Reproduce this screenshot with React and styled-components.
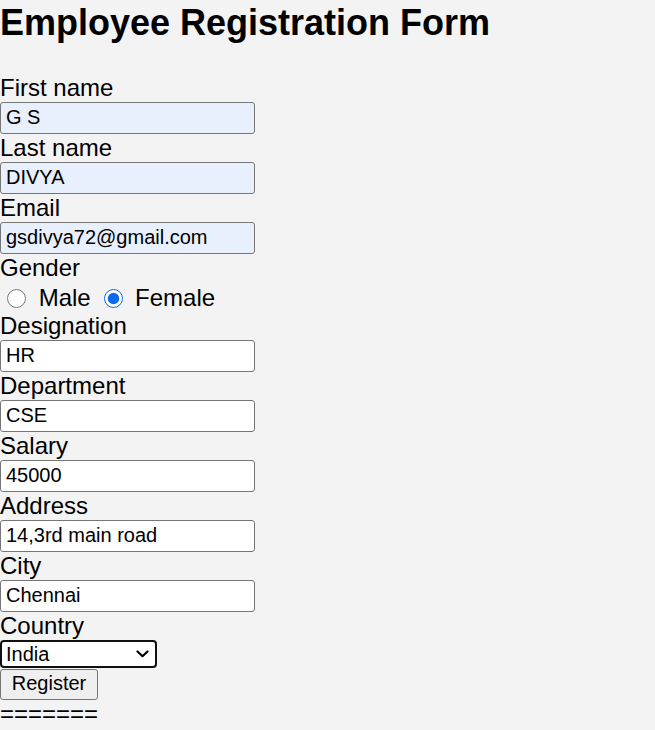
import React from "react";
import styled, { createGlobalStyle } from "styled-components";

const Global = createGlobalStyle`
  html, body { margin: 0; padding: 0; background: #f3f3f3; }
  body { font-family: "Liberation Sans", Arial, sans-serif; color: #000; }
`;

const Page = styled.div`
  width: 655px;
  min-height: 730px;
  background: #f3f3f3;
`;

const Title = styled.h1`
  margin: 2px 0 31px 0;
  font-size: 36px;
  line-height: 41px;
  font-weight: bold;
`;

const Form = styled.form`
  display: flex;
  flex-direction: column;
  align-items: flex-start;
`;

const Label = styled.label`
  display: block;
  font-size: 24px;
  line-height: 28px;
  height: 28px;
`;

const TextInput = styled.input`
  box-sizing: border-box;
  width: 255px;
  height: 32px;
  margin: 0;
  padding: 0 4px 2px 5px;
  border: 1px solid #767676;
  border-radius: 3px;
  font-family: "Liberation Sans", Arial, sans-serif;
  font-size: 20px;
  color: #000;
  background: ${(p) => (p.$filled ? "#e8f0fe" : "#fff")};
  outline: none;
`;

const RadioRow = styled.div`
  box-sizing: border-box;
  font-size: 24px;
  line-height: 29px;
  height: 30px;
  padding-top: 1px;
  white-space: pre;
`;

const Radio = styled.input`
  width: 19px;
  height: 19px;
  margin: 0 ${(p) => p.$mr}px 0 ${(p) => p.$ml}px;
  vertical-align: -2px;
  accent-color: #0b6bea;
`;

const SelectWrap = styled.div`
  position: relative;
  width: 157px;
  height: 28px;
`;

const Select = styled.select`
  appearance: none;
  box-sizing: border-box;
  width: 157px;
  height: 28px;
  margin: 0;
  padding: 0 0 0 4px;
  border: 2px solid #101010;
  border-radius: 4px;
  background: #fff;
  font-family: "Liberation Sans", Arial, sans-serif;
  font-size: 20px;
  color: #000;
  outline: none;
`;

const Chevron = styled.svg`
  position: absolute;
  right: 8px;
  top: 10px;
  pointer-events: none;
`;

const Button = styled.button`
  box-sizing: border-box;
  width: 98px;
  height: 31px;
  margin: 1px 0 0 0;
  padding: 0 0 2px 0;
  border: 1px solid #767676;
  border-radius: 3px;
  background: #efefef;
  font-family: "Liberation Sans", Arial, sans-serif;
  font-size: 20px;
  color: #000;
`;

const Footer = styled.div`
  font-size: 24px;
  line-height: 28px;
`;

const fields = [
  ["First name", "G S", true],
  ["Last name", "DIVYA", true],
  ["Email", "gsdivya72@gmail.com", true],
];

const fields2 = [
  ["Designation", "HR"],
  ["Department", "CSE"],
  ["Salary", "45000"],
  ["Address", "14,3rd main road"],
  ["City", "Chennai"],
];

export default function App() {
  return (
    <Page>
      <Global />
      <Title>Employee Registration Form</Title>
      <Form onSubmit={(e) => e.preventDefault()}>
        {fields.map(([l, v, f]) => (
          <React.Fragment key={l}>
            <Label>{l}</Label>
            <TextInput $filled={f} defaultValue={v} />
          </React.Fragment>
        ))}
        <Label>Gender</Label>
        <RadioRow>
          <Radio type="radio" name="g" $ml={7} $mr={6} />
          {" Male "}
          <Radio type="radio" name="g" $ml={7} $mr={5} defaultChecked />
          {" Female"}
        </RadioRow>
        {fields2.map(([l, v]) => (
          <React.Fragment key={l}>
            <Label>{l}</Label>
            <TextInput defaultValue={v} />
          </React.Fragment>
        ))}
        <Label>Country</Label>
        <SelectWrap>
          <Select defaultValue="India">
            <option>India</option>
          </Select>
          <Chevron width="13" height="8" viewBox="0 0 13 8">
            <path d="M1.5 1.5 L6.5 6.2 L11.5 1.5" fill="none" stroke="#000" strokeWidth="2.2" strokeLinecap="round" strokeLinejoin="round" />
          </Chevron>
        </SelectWrap>
        <Button type="submit">Register</Button>
        <Footer>=======</Footer>
      </Form>
    </Page>
  );
}
